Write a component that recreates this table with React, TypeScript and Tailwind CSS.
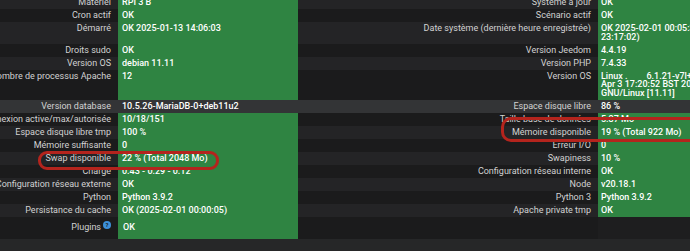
import type { ReactNode } from 'react'

type Row = {
  l: ReactNode
  v: ReactNode
  rl?: ReactNode
  rv?: ReactNode
  hover?: boolean
  tall?: boolean
}

const rows: Row[] = [
  { l: 'Matériel', v: 'RPI 3 B', rl: 'Système à jour', rv: 'OK' },
  { l: 'Cron actif', v: 'OK', rl: 'Scénario actif', rv: 'OK' },
  {
    l: 'Démarré',
    v: 'OK 2025-01-13 14:06:03',
    rl: 'Date système (dernière heure enregistrée)',
    rv: (
      <>
        OK 2025-02-01 00:05:35 (2025-01-31
        <br />
        23:17:02)
      </>
    ),
  },
  { l: 'Droits sudo', v: 'OK', rl: 'Version Jeedom', rv: '4.4.19' },
  { l: 'Version OS', v: 'debian 11.11', rl: 'Version PHP', rv: '7.4.33' },
  {
    l: 'Nombre de processus Apache',
    v: '12',
    rl: 'Version OS',
    rv: (
      <>
        Linux .<span className="inline-block w-[19px]" />6.1.21-v7l+ #1642 SMP
        <br />
        Apr 3 17:20:52 BST 2023 armv7l
        <br />
        GNU/Linux [11.11]
      </>
    ),
  },
  { l: 'Version database', v: '10.5.26-MariaDB-0+deb11u2', rl: 'Espace disque libre', rv: '86 %', hover: true },
  { l: 'Nombre de connexion active/max/autorisée', v: '10/18/151', rl: 'Taille base de données', rv: '5.37 Mo' },
  { l: 'Espace disque libre tmp', v: '100 %', rl: 'Mémoire disponible', rv: '19 % (Total 922 Mo)' },
  { l: 'Mémoire suffisante', v: '0', rl: 'Erreur I/O', rv: '0' },
  { l: 'Swap disponible', v: '22 % (Total 2048 Mo)', rl: 'Swapiness', rv: '10 %' },
  { l: 'Charge', v: '0.43 - 0.29 - 0.12', rl: 'Configuration réseau interne', rv: 'OK' },
  { l: 'Configuration réseau externe', v: 'OK', rl: 'Node', rv: 'v20.18.1' },
  { l: 'Python', v: 'Python 3.9.2', rl: 'Python 3', rv: 'Python 3.9.2' },
  { l: 'Persistance du cache', v: 'OK (2025-02-01 00:00:05)', rl: 'Apache private tmp', rv: 'OK' },
  {
    l: (
      <>
        Plugins
        <span className="ml-[2px] inline-flex h-[8px] w-[8px] -translate-y-[3px] items-center justify-center rounded-full bg-[#3d8fd8] text-[6px] font-bold leading-none text-[#1b1b1c]">
          ?
        </span>
      </>
    ),
    v: <span className="pl-[1px]">OK</span>,
    tall: true,
  },
]

export default function App() {
  return (
    <div
      className="relative h-[251px] w-[690px] overflow-hidden bg-[#262728] text-[9px] leading-[8.5px]"
      style={{ fontFamily: 'Roboto, "Liberation Sans", sans-serif' }}
    >
      <div className="-mt-[4px] -ml-[42px] grid w-[840px] grid-cols-[160px_180px_300px_200px]">
        {rows.map((r, i) => {
          const stripe = r.hover ? 'bg-[#333436]' : i % 2 === 0 ? 'bg-[#242426]' : 'bg-[#1b1b1c]'
          const green = r.hover ? 'bg-[#333436]' : 'bg-[#2f8442]'
          const pad = r.tall ? 'py-[6.5px]' : 'py-[2.25px]'
          return (
            <div key={i} className="contents">
              <div className={`${stripe} ${pad} flex justify-end overflow-hidden whitespace-nowrap pr-[7px] text-[#d2d2d2]`}>
                <span>{r.l}</span>
              </div>
              <div className={`${green} ${pad} overflow-hidden whitespace-nowrap pl-[4px] font-medium text-white`}>{r.v}</div>
              <div className={`${r.rl ? stripe : 'bg-[#1b1b1c]'} ${pad} flex justify-end whitespace-nowrap pr-[7px] text-[#d2d2d2]`}>
                <span>{r.rl}</span>
              </div>
              <div className={`${r.rv ? green : 'bg-[#1e1e1f]'} ${pad} whitespace-nowrap pl-[3px] font-medium text-white`}>
                {r.rv}
              </div>
            </div>
          )
        })}
      </div>

      {/* red annotations */}
      <div className="absolute left-[38px] top-[151px] h-[19px] w-[181px] rounded-[9px] border-[3px] border-[#b4241d]" />
      <div className="absolute left-[501px] top-[117px] h-[25px] w-[230px] rounded-[10px] border-[3px] border-[#b4241d]" />
    </div>
  )
}
